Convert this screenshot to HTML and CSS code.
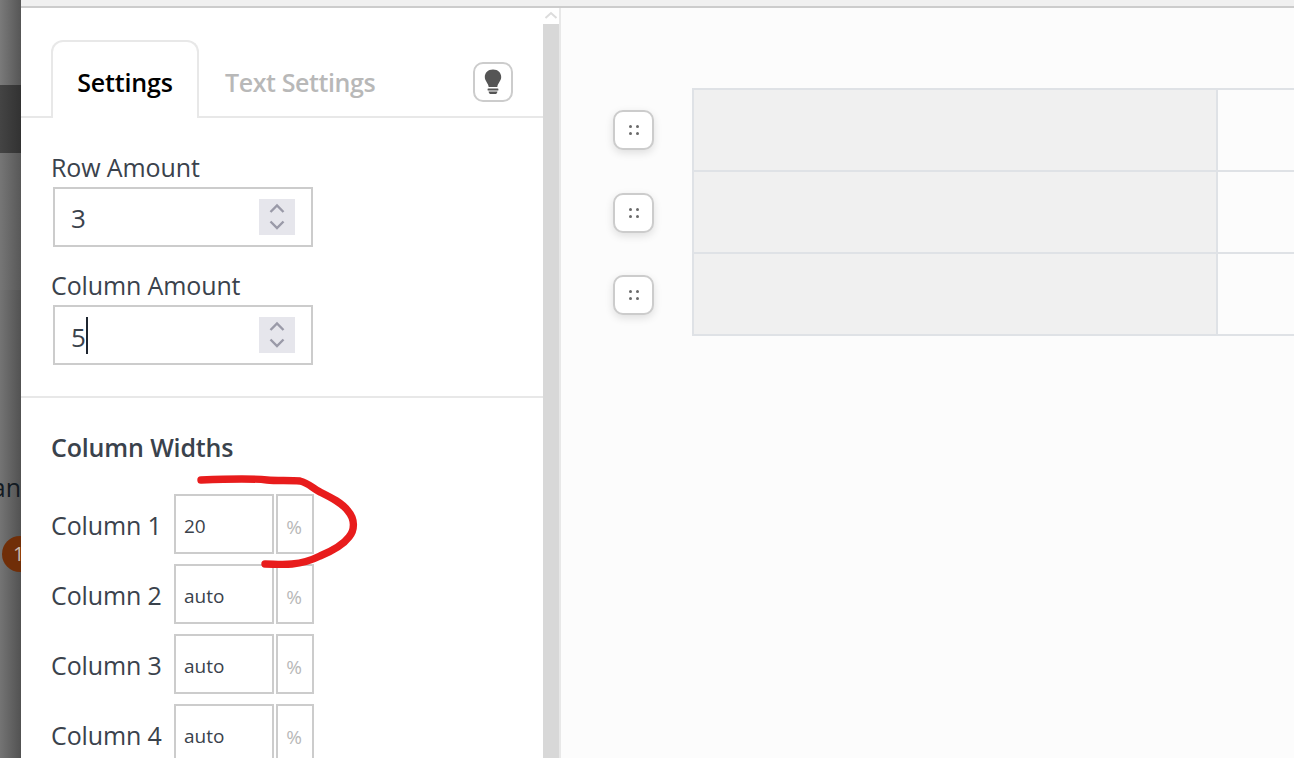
FILE: index.html
```html
<!DOCTYPE html>
<html lang="en">
<head>
<meta charset="utf-8">
<title>Table settings</title>
<link rel="stylesheet" href="styles.css">
</head>
<body>
<div class="app">
  <div class="backdrop">
    <div class="bd-top"></div>
    <div class="bd-dark"></div>
    <div class="bd-mid"></div>
    <div class="bd-low">
      <div class="bd-text">an</div>
      <div class="bd-badge">1</div>
    </div>
  </div>
  <div class="window">
    <div class="topline"></div>
    <div class="workspace">
      <aside class="panel">
        <div class="tabs">
          <div class="tab active">Settings</div>
          <div class="tab muted">Text Settings</div>
          <button class="bulb" type="button" aria-label="Tips">
            <svg width="20" height="26" viewBox="0 0 20 26"><path d="M10 0.5C4.8 0.5 1.8 4 1.8 8c0 4 3.4 6 3.900 10h8.600c.5-4 3.900-6 3.900-10 0-4-3-7.500-8.200-7.500z" fill="#555"/><rect x="4.600" y="19.400" width="10.800" height="2.200" rx=".6" fill="#555"/><path d="M5.600 22.400h8.800c0 1.600-1.200 2.600-2.400 2.600H8c-1.200 0-2.400-1-2.400-2.600z" fill="#555"/></svg>
          </button>
        </div>
        <div class="amounts">
          <label class="field-label">Row Amount</label>
          <div class="num-input">
            <span class="num-value">3</span>
            <span class="spinner"><svg width="16" height="28" viewBox="0 0 16 28"><path d="M1.500 9L8 2.500 14.500 9M1.500 18.500L8 25 14.500 18.500" fill="none" stroke="#9a9aa8" stroke-width="2.400"/></svg></span>
          </div>
          <label class="field-label second">Column Amount</label>
          <div class="num-input">
            <span class="num-value lower">5<i class="caret"></i></span>
            <span class="spinner"><svg width="16" height="28" viewBox="0 0 16 28"><path d="M1.500 9L8 2.500 14.500 9M1.500 18.500L8 25 14.500 18.500" fill="none" stroke="#9a9aa8" stroke-width="2.400"/></svg></span>
          </div>
        </div>
        <div class="widths">
          <h3 class="widths-title">Column Widths</h3>
          <div class="width-row"><span class="width-label">Column 1</span><span class="width-input">20</span><span class="unit">%</span></div>
          <div class="width-row"><span class="width-label">Column 2</span><span class="width-input">auto</span><span class="unit">%</span></div>
          <div class="width-row"><span class="width-label">Column 3</span><span class="width-input">auto</span><span class="unit">%</span></div>
          <div class="width-row"><span class="width-label">Column 4</span><span class="width-input">auto</span><span class="unit">%</span></div>
        </div>
      </aside>
      <div class="scrollbar">
        <div class="scroll-up"><svg width="14" height="8" viewBox="0 0 14 8"><path d="M1.500 7L7 2l5.500 5" fill="none" stroke="#dcdcdc" stroke-width="2"/></svg></div>
        <div class="scroll-thumb"></div>
      </div>
      <main class="canvas">
        <div class="handles">
          <div class="handle"><span class="dots"><i></i><i></i><i></i><i></i></span></div>
          <div class="handle"><span class="dots"><i></i><i></i><i></i><i></i></span></div>
          <div class="handle"><span class="dots"><i></i><i></i><i></i><i></i></span></div>
        </div>
        <div class="grid">
          <div class="cell sel"></div><div class="cell"></div>
          <div class="cell sel"></div><div class="cell"></div>
          <div class="cell sel"></div><div class="cell"></div>
        </div>
      </main>
    </div>
  </div>
  <svg class="scribble" width="1294" height="758" viewBox="0 0 1294 758"><path d="M201 480C225 479 250 478 267 480C277 481 290 480 300 481C309 483 313 489 320 492C332 498 342 503 348 511C355 519 355 530 349 537C343 545 332 551 320 556C310 561 303 563 292 564C283 565 273 564 265 564" fill="none" stroke="#e81c1c" stroke-width="7.400" stroke-linecap="round" stroke-linejoin="round"/></svg>
</div>
</body>
</html>
```
FILE: styles.css
```css
* { box-sizing: border-box; }
html, body { margin: 0; padding: 0; }
body {
  font-family: "Open Sans", "Noto Sans", sans-serif;
  color: #3a424c;
  background: #fcfcfc;
}
.app {
  position: relative;
  display: flex;
  width: 1294px;
  height: 758px;
  overflow: hidden;
}
.backdrop {
  width: 21px;
  flex: none;
  display: flex;
  flex-direction: column;
  overflow: hidden;
}
.bd-top { height: 85px; background: linear-gradient(90deg, #7a7a7a, #565656); }
.bd-dark { height: 68px; background: linear-gradient(90deg, #444, #323232); }
.bd-mid { height: 137px; background: linear-gradient(90deg, #767676, #585858); }
.bd-low { flex: 1; background: linear-gradient(90deg, #747474, #525252); display: flex; flex-direction: column; }
.bd-text {
  margin-top: 181px;
  width: 21px;
  height: 33px;
  display: flex;
  justify-content: flex-end;
  font-size: 25px;
  line-height: 33px;
  color: #121a22;
  white-space: nowrap;
  overflow: hidden;
}
.bd-badge {
  margin: 32px 0 0 2px;
  width: 36px;
  height: 36px;
  border-radius: 50%;
  background: #702e08;
  color: #c9b8ac;
  font-size: 20px;
  line-height: 36px;
  padding-left: 11px;
}
.window { flex: 1; display: flex; flex-direction: column; min-width: 0; }
.topline { height: 8px; flex: none; background: #f0f0f0; border-bottom: 2px solid #ccc; }
.workspace { flex: 1; display: flex; min-height: 0; }
.panel {
  width: 522px;
  flex: none;
  background: #fff;
  overflow: hidden;
}
.tabs {
  height: 110px;
  padding: 32px 30px 0;
  display: flex;
  align-items: stretch;
  border-bottom: 2px solid #e8e8e8;
  position: relative;
}
.tab {
  font-size: 25px;
  font-weight: 600;
  line-height: 30px;
  padding-top: 25px;
  white-space: nowrap;
  letter-spacing: -.15px;
}
.tab.active {
  width: 148px;
  height: 78px;
  text-align: center;
  color: #000;
  background: #fff;
  border: 2px solid #e8e8e8;
  border-bottom: none;
  border-radius: 12px 12px 0 0;
}
.tab.muted { color: #b8b8b8; margin-left: 26px; padding-top: 27px; letter-spacing: -.4px; }
.bulb {
  margin: 22px 0 0 auto;
  width: 40px;
  height: 40px;
  padding: 0;
  background: #fff;
  border: 2px solid #ccc;
  border-radius: 10px;
  display: flex;
  align-items: center;
  justify-content: center;
}
.amounts { padding: 33px 30px 0; border-bottom: 2px solid #e8e8e8; height: 280px; }
.field-label {
  display: block;
  font-size: 25px;
  line-height: 33px;
  letter-spacing: -.12px;
}
.field-label.second { margin-top: 22px; }
.num-input {
  margin: 3px 0 0 2px;
  width: 260px;
  height: 60px;
  border: 2px solid #ccc;
  display: flex;
  align-items: center;
  justify-content: space-between;
  padding: 0 16px;
  background: #fff;
}
.num-value { font-size: 26px; line-height: 36px; display: flex; align-items: center; color: #3a424c; padding-top: 1px; }
.num-value.lower { padding-top: 4px; }
.caret { display: block; width: 2px; height: 37px; margin-top: -4px; background: #1e2630; }
.spinner {
  width: 36px;
  height: 36px;
  background: #e6e6ec;
  display: flex;
  align-items: center;
  justify-content: center;
}
.widths { padding: 33px 30px 0; }
.widths-title {
  margin: 0 0 30px;
  font-size: 25px;
  line-height: 33px;
  font-weight: 600;
  letter-spacing: -.15px;
}
.width-row { display: flex; align-items: stretch; height: 60px; margin-bottom: 10px; }
.width-label { width: 123px; font-size: 25px; line-height: 62px; white-space: nowrap; letter-spacing: -.12px; }
.width-input {
  width: 100px;
  border: 2px solid #ccc;
  font-size: 19px;
  line-height: 60px;
  padding-left: 8px;
  color: #3a424c;
}
.unit {
  width: 38px;
  margin-left: 2px;
  border: 2px solid #ccc;
  font-size: 19px;
  line-height: 62px;
  text-align: center;
  padding-right: 2px;
  color: #b8b8b8;
}
.scrollbar { width: 18px; flex: none; background: #fff; border-right: 2px solid #e8e8e8; display: flex; flex-direction: column; }
.scroll-up { height: 16px; display: flex; align-items: center; justify-content: center; padding-bottom: 2px; }
.scroll-thumb { flex: 1; background: #d8d8d8; }
.canvas { flex: 1; min-width: 0; background: #fcfcfc; display: flex; overflow: hidden; padding-top: 80px; }
.handles { flex: none; margin-left: 52px; width: 79px; display: flex; flex-direction: column; }
.handle {
  width: 41px;
  height: 40px;
  margin: 22px 0 20px;
  background: #fff;
  border: 2px solid #ccc;
  border-radius: 10px;
  box-shadow: 0 3px 8px rgba(0,0,0,.12);
  display: flex;
  align-items: center;
  justify-content: center;
}
.handle + .handle { margin-top: 23px; margin-bottom: 19px; }
.handle:last-child { margin-top: 23px; }
.dots { display: grid; grid-template-columns: 3px 3px; gap: 4px; }
.dots i { width: 3px; height: 3px; border-radius: 50%; background: #6a6a6a; }
.grid {
  flex: none;
  display: grid;
  grid-template-columns: 524px 600px;
  grid-auto-rows: 82px;
  height: 248px;
  border-top: 2px solid #dfe2e6;
  border-left: 2px solid #dfe2e6;
}
.cell { border-right: 2px solid #dfe2e6; border-bottom: 2px solid #dfe2e6; }
.cell.sel { background: #f0f0f0; }
.scribble { position: absolute; left: 0; top: 0; pointer-events: none; }
```
